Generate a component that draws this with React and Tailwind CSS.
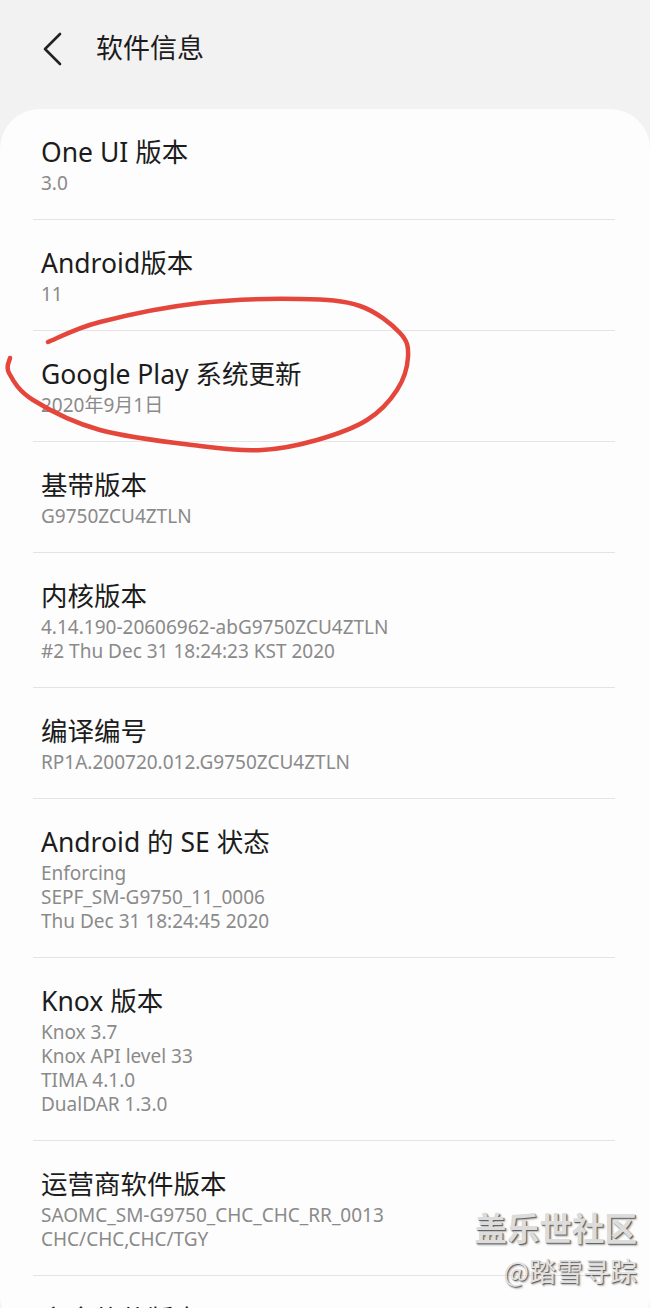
import React from "react";

const items = [
  { t: "One UI 版本", s: ["3.0"] },
  { t: "Android版本", s: ["11"] },
  { t: "Google Play 系统更新", s: ["2020年9月1日"] },
  { t: "基带版本", s: ["G9750ZCU4ZTLN"] },
  { t: "内核版本", s: ["4.14.190-20606962-abG9750ZCU4ZTLN", "#2 Thu Dec 31 18:24:23 KST 2020"] },
  { t: "编译编号", s: ["RP1A.200720.012.G9750ZCU4ZTLN"] },
  { t: "Android 的 SE 状态", s: ["Enforcing", "SEPF_SM-G9750_11_0006", "Thu Dec 31 18:24:45 2020"] },
  { t: "Knox 版本", s: ["Knox 3.7", "Knox API level 33", "TIMA 4.1.0", "DualDAR 1.3.0"] },
  { t: "运营商软件版本", s: ["SAOMC_SM-G9750_CHC_CHC_RR_0013", "CHC/CHC,CHC/TGY"] },
];

const pts = [
  [48, 342], [100, 322], [200, 303], [300, 299], [360, 306], [400, 333], [408, 357],
  [397, 390], [367, 420], [317, 440], [262, 450], [200, 446], [100, 430], [33, 400],
  [9, 373], [10, 358],
];

function smoothPath(p) {
  let d = `M${p[0][0]},${p[0][1]}`;
  for (let i = 0; i < p.length - 1; i++) {
    const p0 = p[i - 1] || p[i];
    const p1 = p[i];
    const p2 = p[i + 1];
    const p3 = p[i + 2] || p2;
    const c1x = p1[0] + (p2[0] - p0[0]) / 6;
    const c1y = p1[1] + (p2[1] - p0[1]) / 6;
    const c2x = p2[0] - (p3[0] - p1[0]) / 6;
    const c2y = p2[1] - (p3[1] - p1[1]) / 6;
    d += ` C${c1x.toFixed(1)},${c1y.toFixed(1)} ${c2x.toFixed(1)},${c2y.toFixed(1)} ${p2[0]},${p2[1]}`;
  }
  return d;
}

const font = { fontFamily: '"Noto Sans", "Noto Sans CJK SC", sans-serif' };

export default function App() {
  return (
    <div className="relative w-[650px] h-[1308px] overflow-hidden bg-[#f2f2f2]" style={font}>
      <div className="h-[109px] flex items-start pt-[31px]">
        <svg className="ml-[40px] mt-[1px]" width="26" height="34" viewBox="0 0 26 34">
          <path d="M20 2 L5 17 L20 32" fill="none" stroke="#222" strokeWidth="2.6" strokeLinecap="round" strokeLinejoin="round" />
        </svg>
        <div className="ml-[30px] text-[27px] leading-[34px] text-[#1c1c1c]">软件信息</div>
      </div>
      <div className="bg-[#fdfdfd] rounded-[40px] px-[33px] pr-[35px]">
        {items.map((it, i) => (
          <div key={i} className="border-b border-[#e4e4e4] px-2 pt-[26px] pb-[24px]">
            <div className="text-[26.5px] leading-[34px] text-[#1c1c1c]">{it.t}</div>
            <div className="mt-[2px]">
              {it.s.map((s, j) => (
                <div key={j} className="text-[19px] leading-[24px] text-[#8a8a8a]">{s}</div>
              ))}
            </div>
          </div>
        ))}
        <div className="px-2 pt-[26px]">
          <div className="text-[26.5px] leading-[34px] text-[#1c1c1c]">安全软件版本</div>
        </div>
      </div>
      <svg className="absolute left-0 top-0 pointer-events-none" width="650" height="1308">
        <path d={smoothPath(pts)} fill="none" stroke="#e5463b" strokeWidth="4.5" strokeLinecap="round" strokeLinejoin="round" />
      </svg>
      <div className="absolute right-[13px] top-[1205px] flex flex-col items-end pointer-events-none" style={{ fontFamily: '"Noto Sans CJK SC", sans-serif' }}>
        <div className="text-[32.5px] leading-[44px] font-bold text-[#dcdcdc]" style={{ textShadow: "1px 1px 1px #5a5a5a, 2px 2px 2px rgba(0,0,0,0.25)" }}>盖乐世社区</div>
        <div className="text-[27px] leading-[40px] text-[#e2e2e2] mt-[2px]" style={{ textShadow: "1px 1px 1px #5a5a5a, 2px 2px 2px rgba(0,0,0,0.25)" }}>@踏雪寻踪</div>
      </div>
    </div>
  );
}
